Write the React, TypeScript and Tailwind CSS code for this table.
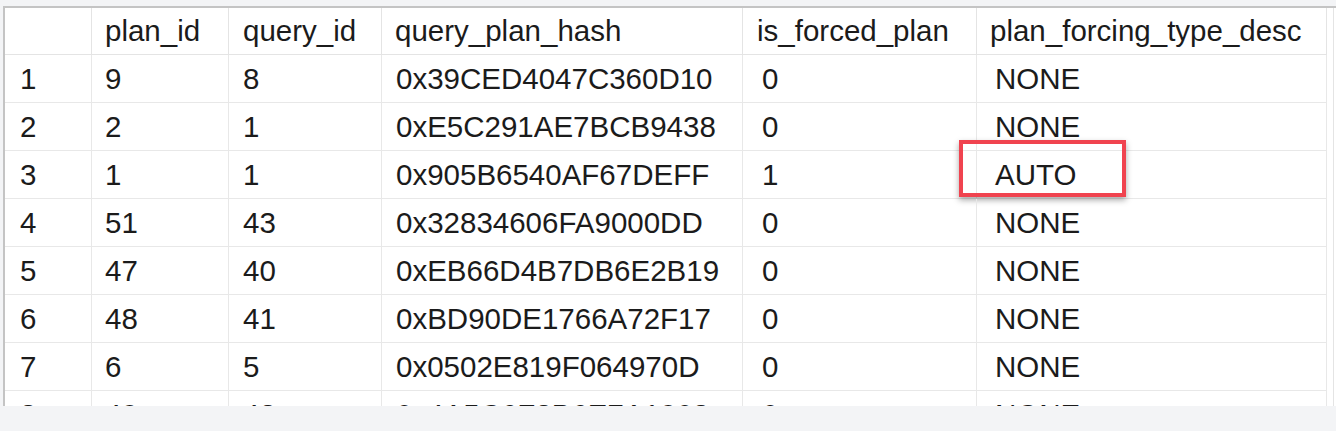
import React from "react";

const rows = [
  ["1", "9", "8", "0x39CED4047C360D10", "0", "NONE"],
  ["2", "2", "1", "0xE5C291AE7BCB9438", "0", "NONE"],
  ["3", "1", "1", "0x905B6540AF67DEFF", "1", "AUTO"],
  ["4", "51", "43", "0x32834606FA9000DD", "0", "NONE"],
  ["5", "47", "40", "0xEB66D4B7DB6E2B19", "0", "NONE"],
  ["6", "48", "41", "0xBD90DE1766A72F17", "0", "NONE"],
  ["7", "6", "5", "0x0502E819F064970D", "0", "NONE"],
  ["8", "49", "42", "0x4A5C6F3B6E7A1908", "0", "NONE"],
];

const headers = ["", "plan_id", "query_id", "query_plan_hash", "is_forced_plan", "plan_forcing_type_desc"];

// data cells in the last two columns sit a little further in than their headers
const dataPad = ["pl-[15px]", "pl-[13px]", "pl-[14px]", "pl-[14px]", "pl-[19px]", "pl-[18px]"];
const headPad = ["pl-[15px]", "pl-[13px]", "pl-[14px]", "pl-[13px]", "pl-[14px]", "pl-[13px]"];

const gridCols = "grid grid-cols-[87px_137px_153px_361px_234px_350px]";

export default function App() {
  return (
    <div className="w-[1336px] h-[431px] bg-[#f3f4f6] pt-[6px] pl-[3px] overflow-hidden font-['Liberation_Sans',Arial,sans-serif] text-[#1b1b1b]">
      <div className="h-[400px] w-[1333px] bg-white border-l-2 border-t-2 border-[#c4c4c4] overflow-hidden flex">
        <div className="w-[1322px]">
          {/* header */}
          <div className={`${gridCols} h-[47px]`}>
            {headers.map((h, i) => (
              <div
                key={i}
                className={`flex items-center border-r border-b border-[#e4e4e4] text-[29.5px] leading-none ${headPad[i]}`}
              >
                {h}
              </div>
            ))}
          </div>

          {/* last row is cut off by the bottom of the grid, as in the screenshot */}
          {rows.map((r) => (
            <div key={r[0]} className={`${gridCols} h-[48px]`}>
              {r.map((v, i) => (
                <div
                  key={i}
                  className={`relative flex items-center border-r border-b border-[#e8e8e8] text-[29.5px] leading-none ${dataPad[i]}`}
                >
                  {v}
                  {v === "AUTO" && (
                    <div className="absolute left-[-18px] top-[-11px] w-[167px] h-[57px] border-4 border-[#f0434f] shadow-[0_3px_6px_rgba(0,0,0,0.35)]" />
                  )}
                </div>
              ))}
            </div>
          ))}
        </div>
        <div className="w-[11px] flex justify-end pr-[2px]">
          <div className="w-px h-full bg-[#e4e4e4]" />
        </div>
      </div>
    </div>
  );
}
